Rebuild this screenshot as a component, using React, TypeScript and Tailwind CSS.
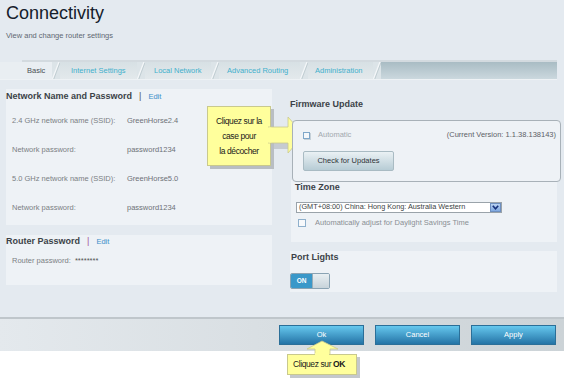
import React from "react";

const Sep = () => (
  <svg width="8" height="17" viewBox="0 0 8 17" className="block shrink-0">
    <rect x="0" y="0" width="8" height="17" fill="#dce4e8" />
    <line x1="0.5" y1="17" x2="7" y2="0" stroke="#f3f6f8" strokeWidth="1.4" />
    <line x1="1.8" y1="17" x2="8" y2="0.5" stroke="#b9c6cc" strokeWidth="0.8" />
  </svg>
);

const Tab = ({ w, pl, label }: { w: string; pl: string; label: string }) => (
  <div className={`${w} ${pl} h-[17px] flex items-center bg-gradient-to-b from-[#d7e0e4] to-[#e3e9ec] text-[7.5px] text-[#42b0cc] whitespace-nowrap`}>
    {label}
  </div>
);

const Row = ({ label, value }: { label: string; value: string }) => (
  <div className="flex h-[29px] items-center text-[7.5px]">
    <span className="w-[115px] text-[#7b7f84]">{label}</span>
    <span className="text-[#6d7176]">{value}</span>
  </div>
);

export default function App() {
  return (
    <div
      className="relative w-[567px] h-[388px] bg-white overflow-hidden"
      style={{ fontFamily: '"Liberation Sans", Arial, sans-serif' }}
    >
      {/* main page */}
      <div className="w-[564px] h-[319px] bg-[#e4eaf0] border-b-2 border-[#bfc6cb] flex flex-col">
        {/* header */}
        <div className="h-[60px] pl-[6px] pt-[2px]">
          <div className="text-[18px] leading-[22px] text-[#15202b]">Connectivity</div>
          <div className="mt-[6px] text-[7.5px] text-[#5f6872]">View and change router settings</div>
        </div>
        {/* tabs */}
        <div className="h-[2px] bg-[#d3dadf] ml-[22px] mr-[7px]" />
        <div className="flex h-[17px] mr-[7px]">
          <div className="w-[52px] h-[17px] pl-[27px] flex items-center text-[7.5px] text-[#4a4f55] bg-[#e9eef2]">Basic</div>
          <Sep />
          <Tab w="w-[77px]" pl="pl-[11px]" label="Internet Settings" />
          <Sep />
          <Tab w="w-[66px]" pl="pl-[9px]" label="Local Network" />
          <Sep />
          <Tab w="w-[81px]" pl="pl-[8px]" label="Advanced Routing" />
          <Sep />
          <Tab w="w-[65px]" pl="pl-[7px]" label="Administration" />
          <Sep />
          <div className="flex-1 h-[17px] bg-gradient-to-b from-[#a9bcc4] to-[#cbd8de]" />
        </div>
        <div className="h-[1px] bg-[#eef2f5] mr-[7px]" />
        {/* content */}
        <div className="flex mt-[9px]">
          {/* left column */}
          <div className="ml-[6px] w-[266px] flex flex-col">
            <div className="bg-[#eef2f6] h-[136px] pl-[6px]">
              <div className="h-[14px] flex items-center text-[9px] font-bold text-[#3c4248] -ml-[6px] pt-[1px]">
                Network Name and Password
                <span className="mx-[7px] font-normal text-[#555]">|</span>
                <span className="font-normal text-[7.5px] text-[#3d8fc9]">Edit</span>
              </div>
              <div className="mt-[3px]">
                <Row label="2.4 GHz network name (SSID):" value="GreenHorse2.4" />
                <Row label="Network password:" value="password1234" />
                <Row label="5.0 GHz network name (SSID):" value="GreenHorse5.0" />
                <Row label="Network password:" value="password1234" />
              </div>
            </div>
            <div className="bg-[#eef2f6] h-[50px] mt-[10px]">
              <div className="h-[14px] flex items-center text-[9px] font-bold text-[#3c4248]">
                Router Password
                <span className="mx-[7px] font-normal text-[#a0549a]">|</span>
                <span className="font-normal text-[7.5px] text-[#3d8fc9]">Edit</span>
              </div>
              <div className="mt-[6px] pl-[6px] text-[7.5px] text-[#7b7f84]">
                Router password:&nbsp; <span className="text-[#555]">********</span>
              </div>
            </div>
          </div>
          {/* right column */}
          <div className="ml-[9px] w-[276px] flex flex-col">
            <div className="h-[31px] flex items-center pl-[9px] text-[9px] font-bold text-[#3c4248]">
              Firmware Update
            </div>
            <div className="relative z-10 ml-[11px] w-[269px] h-[62px] border border-[#a8b1b8] rounded-[4px] bg-[#eef2f6] pt-[9px] pl-[10px] pr-[4px]">
              <div className="flex items-center h-[10px] text-[7.5px]">
                <span className="w-[7px] h-[7px] border border-[#7fa7c9] bg-[#f4f7fa] shadow-[1px_1px_0_#c5d0d8]" />
                <span className="ml-[8px] text-[#a2a8ae]">Automatic</span>
                <span className="ml-auto text-[#5c6166]">(Current Version: 1.1.38.138143)</span>
              </div>
              <div className="mt-[11px] w-[91px] h-[20px] rounded-[2px] border border-[#a9bbc3] bg-gradient-to-b from-[#eaf1f4] to-[#b7ccd5] flex items-center justify-center text-[7.5px] text-[#2e3338]">
                Check for Updates
              </div>
            </div>
            <div className="-mt-[2px] ml-[10px] w-[266px] h-[62px] bg-[#eef2f6] pl-[4px]">
              <div className="h-[12px] flex items-center pt-[3px] text-[9px] font-bold text-[#3c4248]">Time Zone</div>
              <div className="mt-[10px] ml-[1px] w-[206px] h-[11px] bg-white border border-[#9aa3aa] flex items-center text-[7.3px] text-[#3a3f44] pl-[2px] whitespace-nowrap">
                (GMT+08:00) China: Hong Kong: Australia Western
                <span className="ml-auto w-[11px] h-[9px] bg-gradient-to-b from-[#b9d3f3] to-[#7fa8e0] border border-[#6d8fc0] flex items-center justify-center">
                  <svg width="7" height="5" viewBox="0 0 7 5"><path d="M0.8 0.8 L3.5 3.8 L6.2 0.8" fill="none" stroke="#15307a" strokeWidth="1.6" /></svg>
                </span>
              </div>
              <div className="mt-[5px] flex items-center h-[10px] text-[7.5px] text-[#8a8f94]">
                <span className="ml-[3px] w-[8px] h-[8px] border border-[#8fb0cc] bg-[#f7f9fb]" />
                <span className="ml-[9px]">Automatically adjust for Daylight Savings Time</span>
              </div>
            </div>
            <div className="mt-[9px] ml-[9px] w-[267px] h-[41px] bg-[#eef2f6]">
              <div className="h-[13px] flex items-center pt-[1px] pl-[1px] text-[9px] font-bold text-[#3c4248]">Port Lights</div>
              <div className="mt-[9px] flex w-[40px] h-[16px] rounded-[2px] overflow-hidden border border-[#8aa3b3]">
                <div className="w-[21px] bg-[#3a98c9] flex items-center justify-center text-[6.5px] font-bold text-white">ON</div>
                <div className="flex-1 bg-gradient-to-b from-[#e9eff2] to-[#c7d3da] border-l border-[#98adb9]" />
              </div>
            </div>
          </div>
        </div>
      </div>
      {/* footer */}
      <div className="w-[564px] h-[32px] bg-gradient-to-r from-[#e4e9ed] to-[#ccd3d7] flex items-center justify-end pr-[8px] gap-[11px]">
        {["Ok", "Cancel", "Apply"].map((b) => (
          <div
            key={b}
            className="w-[85px] h-[20px] bg-gradient-to-b from-[#66c8ee] to-[#2474a6] border border-[#2b6f98] flex items-center justify-center text-[7.5px] text-white"
          >
            {b}
          </div>
        ))}
      </div>

      {/* callout 1 */}
      <div className="absolute left-[207px] top-[106px] w-[64px] h-[60px] bg-[#ffff9c] border border-[#c9c98d] shadow-[3px_3px_0_#b9bec3] flex flex-col items-center justify-center text-[8.5px] leading-[15px] text-[#1a1a1a] tracking-[-0.4px]">
        <span>Cliquez sur la</span>
        <span>case pour</span>
        <span>la décocher</span>
      </div>
      <svg className="absolute left-[268px] top-[116px]" width="40" height="44" viewBox="0 0 40 44">
        <polygon points="3,26 3,12 22,12 22,3 37,21 22,39 22,30 3,30" fill="#b9bec3" opacity="0.7" transform="translate(2,3)" />
        <polygon points="0,11 20,11 20,1 36,19 20,37 20,27 0,27" fill="#ffff9c" stroke="#c9c98d" strokeWidth="0.8" />
        <rect x="0" y="11.5" width="3.5" height="15" fill="#ffff9c" />
      </svg>

      {/* callout 2 */}
      <svg className="absolute left-[306px] top-[340px]" width="34" height="17" viewBox="0 0 34 17">
        <polygon points="16,1 32,9 24,9 24,17 9,17 9,9 1,9" fill="#ffff9c" stroke="#c9c98d" strokeWidth="0.8" />
      </svg>
      <div className="absolute left-[287px] top-[354px] w-[70px] h-[21px] bg-[#ffff9c] border border-[#c9c98d] shadow-[3px_3px_0_#c4c8cc] flex items-center pl-[5px] text-[8.5px] text-[#1a1a1a] tracking-[-0.4px]">
        Cliquez sur&nbsp;<span className="font-bold">OK</span>
      </div>
      <div className="absolute left-[315px] top-[353px] w-[14px] h-[2px] bg-[#ffff9c]" />
    </div>
  );
}
